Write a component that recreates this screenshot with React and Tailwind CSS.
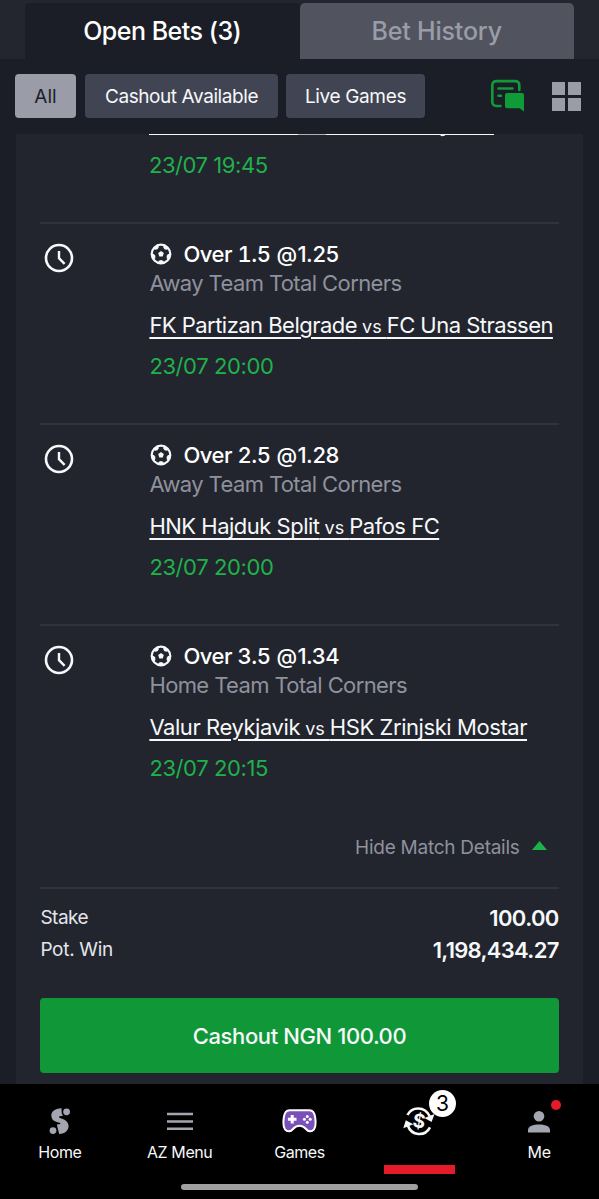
import React from "react";

const bets = [
  { pick: "Over 1.5", odds: "1.25", market: "Away Team Total Corners", home: "FK Partizan Belgrade", away: "FC Una Strassen", time: "23/07 20:00", tracking: "tracking-[-0.53px]" },
  { pick: "Over 2.5", odds: "1.28", market: "Away Team Total Corners", home: "HNK Hajduk Split", away: "Pafos FC", time: "23/07 20:00", tracking: "tracking-[-0.5px]" },
  { pick: "Over 3.5", odds: "1.34", market: "Home Team Total Corners", home: "Valur Reykjavik", away: "HSK Zrinjski Mostar", time: "23/07 20:15", tracking: "tracking-[-0.43px]" },
];

const patchAngles = [36, 108, 180, 252, 324];

function Clock() {
  return (
    <svg className="size-[30px]" viewBox="0 0 30 30" fill="none" stroke="#f7f8fa">
      <circle cx="15" cy="15" r="13" strokeWidth="2.6" />
      <path d="M15 8V15.2L20.6 20.8" strokeWidth="2.4" />
    </svg>
  );
}

function Ball() {
  return (
    <svg className="block size-[22px]" viewBox="0 0 22 22">
      <circle cx="11" cy="11" r="9.3" fill="none" stroke="#f7f8fa" strokeWidth="2.2" />
      <path d="M11 8.1L13.8 10.1L12.7 13.4H9.3L8.2 10.1Z" fill="#f7f8fa" />
      {patchAngles.map((a) => (
        <path key={a} d="M7.6 1.5H14.4L13.2 4.3L11 5L8.8 4.3Z" fill="#f7f8fa" transform={`rotate(${a} 11 11)`} />
      ))}
    </svg>
  );
}

function Bet({ bet }) {
  return (
    <div className="flex h-[201px] border-t-2 border-[#30333b]">
      <div className="w-[109px] shrink-0 pt-[19px] pl-[4px]"><Clock /></div>
      <div className="whitespace-nowrap pt-[16px] text-[22px]">
        <div className="flex h-[29px] items-center font-medium text-white">
          <span className="mr-[11px] mb-[2px] ml-[1px]"><Ball /></span>
          <span className="w-[93px] tracking-[-0.45px] tabular-nums">{bet.pick}</span>
          <span className="w-[21px] text-[21px]">@</span>
          <span className="tracking-[-0.4px]">{bet.odds}</span>
        </div>
        <div className="h-[29px] leading-[29px] tracking-[-0.61px] text-[#8f919c]">{bet.market}</div>
        <div className={`mt-[13px] h-[29px] leading-[29px] text-[#f7f8fa] underline decoration-[1.5px] underline-offset-[4px] ${bet.tracking}`}>
          {bet.home}<span className="text-[18px] tracking-[0px]"> vs </span>{bet.away}
        </div>
        <div className="mt-[12px] h-[29px] leading-[29px] tracking-[-0.4px] text-[#1fb24a]">{bet.time}</div>
      </div>
    </div>
  );
}

function NavItem({ icon, label }) {
  return (
    <div className="flex w-[120px] flex-col items-center pt-[19px]">
      <div className="flex h-[35px] items-center">{icon}</div>
      <div className="h-[28px] text-[16px] leading-[28px] tracking-[-0.4px] text-[#f7f8fa]">{label}</div>
    </div>
  );
}

export default function App() {
  return (
    <div className="flex h-[1199px] w-[599px] flex-col overflow-hidden bg-[#1b1e26] font-['Inter',sans-serif]">
      <div className="flex h-[59px] shrink-0 bg-[#23262f] px-[25px] pt-[3px] text-[25px] font-medium">
        <div className="flex h-[56px] w-[274.5px] items-center justify-center rounded-t-[4px] bg-[#1b1e26] pt-[2px] tracking-[-0.5px] text-white">Open Bets (3)</div>
        <div className="flex h-[56px] w-[274.5px] items-center justify-center rounded-t-[5px] bg-[#51545e] pt-[2px] tracking-[-0.2px] text-[#9a9ca8]">Bet History</div>
      </div>

      <div className="flex h-[75px] shrink-0 items-start pt-[15px] pl-[15px] text-[19px] text-[#f7f8fa]">
        <div className="flex h-[44px] w-[61px] items-center justify-center rounded-[4px] bg-[#9a9ca8] pt-[2px] text-[#1b1e26]">All</div>
        <div className="ml-[9px] flex h-[44px] w-[193px] items-center justify-center rounded-[4px] bg-[#414553] pt-[2px] tracking-[-0.42px]">Cashout Available</div>
        <div className="ml-[8px] flex h-[44px] w-[139px] items-center justify-center rounded-[4px] bg-[#414553] pt-[2px] tracking-[-0.35px]">Live Games</div>
        <svg className="mt-[5px] ml-[65px] h-[34px] w-[34px]" viewBox="0 0 34 34" fill="none" stroke="#0f9b38" strokeWidth="2.6">
          <path d="M10.5 27H6.5Q2.3 27 2.3 22.8V6.3Q2.3 2.1 6.5 2.1H25Q29.3 2.1 29.3 6.3V11" strokeLinecap="round" />
          <path d="M8.5 9.5H22.5M8.5 16.8H11" strokeLinecap="round" />
          <path d="M17 14H32Q34 14 34 16V32.5L29.5 29.2H17Q15 29.2 15 27.2V16Q15 14 17 14Z" fill="#0f9b38" stroke="none" />
        </svg>
        <div className="mt-[8px] ml-[28px] grid grid-cols-2 gap-[3px]">
          <i className="size-[13px] bg-[#9a9ca8]" /><i className="size-[13px] bg-[#9a9ca8]" />
          <i className="size-[13px] bg-[#9a9ca8]" /><i className="size-[13px] bg-[#9a9ca8]" />
        </div>
      </div>

      <div className="mx-[16px] h-[950px] shrink-0 overflow-hidden bg-[#22252e] px-[24.4px]">
        <div className="h-[88px] pl-[108.6px]">
          <svg className="-mt-px block h-[4px] w-[345px]" viewBox="0 0 345 4">
            <path d="M0 0H345V2H0Z" fill="#f7f8fa" />
            <path d="M149 0H177V2H149Z" fill="#aeb0b6" />
            <path d="M291 1.5H297Q296 3.2 293 3.2Q291.5 3 291 1.5Z" fill="#f7f8fa" />
          </svg>
          <div className="mt-[14px] h-[30px] text-[22px] leading-[29px] tracking-[-0.45px] text-[#1fb24a]">23/07 19:45</div>
        </div>
        <div className="mt-px">
          {bets.map((bet) => <Bet key={bet.home} bet={bet} />)}
        </div>
        <div className="flex h-[62px] items-start justify-end gap-[12px] pt-[9px] pr-[12px] text-[19px] leading-[28px] tracking-[-0.25px] text-[#8f919c]">
          <span>Hide Match Details</span>
          <svg className="mt-[7px] h-[9px] w-[15px]" viewBox="0 0 15 9"><path d="M7.5 0L15 9H0Z" fill="#1fb24a" /></svg>
        </div>
        <div className="border-t-2 border-[#30333b] pt-[14px] text-[19px] text-[#e4e5ea]">
          <div className="flex h-[31px] items-center justify-between"><span className="tracking-[-0.5px]">Stake</span><span className="text-[22px] font-semibold tracking-[-0.65px] text-[#f7f8fa]">100.00</span></div>
          <div className="flex h-[32px] items-center justify-between"><span className="tracking-[-0.3px]">Pot. Win</span><span className="text-[22px] font-semibold tracking-[-0.7px] text-[#f7f8fa]">1,198,434.27</span></div>
        </div>
        <button className="mt-[32px] flex h-[75px] w-full items-center justify-center rounded-[4px] bg-[#109838] pt-[2px] text-[22px] font-medium tracking-[-0.4px] text-[#f7f8fa]">Cashout NGN 100.00</button>
      </div>

      <nav className="relative flex h-[115px] shrink-0 bg-black">
        <NavItem label="Home" icon={
          <svg className="h-[28px] w-[22px]" viewBox="0 0 22 28">
            <path d="M12.6 1.2C5.6 1.2 1.8 4.9 2.4 9.2C2.9 13.4 6.4 14.7 9.6 15.5C12 16.1 12.2 17.2 9.6 17.3L7.8 17.4L10.2 26.9C16.4 26.7 20.1 23 19.5 18.2C18.9 13.7 15 12.3 12 11.4C9.7 10.7 9.2 9.2 12 9L14 9Q12.7 7 12.6 5Z" fill="#a3a5b0" />
            <circle cx="17.6" cy="4.8" r="3.4" fill="#a3a5b0" />
            <circle cx="4" cy="23.6" r="3.4" fill="#a3a5b0" />
          </svg>} />
        <NavItem label="AZ Menu" icon={
          <svg className="h-[20px] w-[26px]" viewBox="0 0 26 20"><path d="M0 3H26M0 10.5H26M0 17.7H26" stroke="#a3a5b0" strokeWidth="2.6" /></svg>} />
        <NavItem label="Games" icon={
          <svg className="h-[24px] w-[35px]" viewBox="0 0 35 24">
            <path d="M7.5 1.2H27.5C31.2 1.2 32.6 4 33.2 8.5C33.8 13 34.2 17.5 32 20.3C29.6 23.2 26.3 22.8 24 20C22 17.6 20 16.7 17.5 16.7C15 16.7 13 17.6 11 20C8.7 22.8 5.4 23.2 3 20.3C.8 17.5 1.2 13 1.8 8.5C2.4 4 3.8 1.2 7.5 1.2Z" fill="#7951b8" stroke="#fff" strokeWidth="2" />
            <path d="M10.2 6V14.6M5.9 10.3H14.5" stroke="#fff" strokeWidth="3" />
            <g fill="#fff"><circle cx="25.3" cy="7.5" r="1.5" /><circle cx="25.3" cy="13.2" r="1.5" /><circle cx="22.4" cy="10.3" r="1.5" /><circle cx="28.2" cy="10.3" r="1.5" /></g>
          </svg>} />
        <NavItem label="" icon={
          <svg className="h-[30px] w-[32px]" viewBox="0 0 32 30">
            <g fill="none" stroke="#f7f8fa" strokeWidth="2.6">
              <path d="M4.5 9C8.8 .8 21.5 -.5 26.8 10.5" />
              <path d="M27 21.4C22 30.8 8.5 30.4 4.6 19" />
            </g>
            <path d="M31.5 8L28.6 16L21.5 12Z" fill="#f7f8fa" />
            <path d="M.3 22.3L2.8 14.3L10.3 18.3Z" fill="#f7f8fa" />
            <text x="16" y="21.8" textAnchor="middle" fontSize="19" fontWeight="700" fill="#f7f8fa" transform="rotate(8 16 15)">$</text>
          </svg>} />
        <NavItem label="Me" icon={
          <svg className="mt-[2px] h-[22px] w-[22px]" viewBox="0 0 22 22" fill="#a3a5b0"><circle cx="11" cy="5.3" r="5.3" /><path d="M0 21.5V19C0 11.8 22 11.8 22 19V21.5Z" /></svg>} />
        <div className="absolute left-[429px] top-[6px] flex size-[27px] items-center justify-center rounded-full bg-white text-[21px] text-black">3</div>
        <div className="absolute left-[551px] top-[16px] size-[10px] rounded-full bg-[#e61b29]" />
        <div className="absolute left-[384px] top-[80.5px] h-[9.5px] w-[70.5px] bg-[#e61b29]" />
        <div className="absolute left-[181px] top-[100px] h-[6px] w-[237px] rounded-full bg-[#a0a0a0]" />
      </nav>
    </div>
  );
}
